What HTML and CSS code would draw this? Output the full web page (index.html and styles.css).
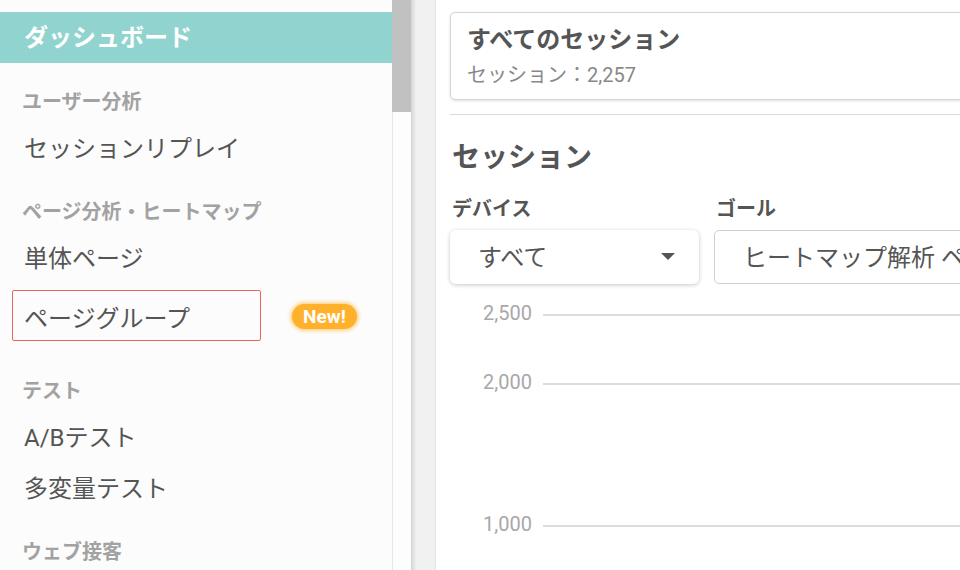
FILE: index.html
```html
<!DOCTYPE html>
<html lang="ja">
<head>
<meta charset="utf-8">
<title>ダッシュボード</title>
<link rel="stylesheet" href="styles.css">
</head>
<body>
<div class="app">
  <aside class="sidebar">
    <div class="nav-top">ダッシュボード</div>
    <section class="nav-section">
      <h3 class="nav-heading">ユーザー分析</h3>
      <a class="nav-item">セッションリプレイ</a>
    </section>
    <section class="nav-section">
      <h3 class="nav-heading">ページ分析・ヒートマップ</h3>
      <a class="nav-item">単体ページ</a>
      <div class="nav-row">
        <a class="nav-item is-selected">ページグループ</a>
        <span class="badge">New!</span>
      </div>
    </section>
    <section class="nav-section">
      <h3 class="nav-heading">テスト</h3>
      <a class="nav-item">A/Bテスト</a>
      <a class="nav-item">多変量テスト</a>
    </section>
    <section class="nav-section">
      <h3 class="nav-heading">ウェブ接客</h3>
    </section>
  </aside>
  <div class="scrollbar"><div class="scrollbar-thumb"></div></div>
  <div class="gutter"></div>
  <main class="main">
    <div class="content">
      <div class="summary-card">
        <div class="summary-title">すべてのセッション</div>
        <div class="summary-sub">セッション：2,257</div>
      </div>
      <hr class="divider">
      <h2 class="section-title">セッション</h2>
      <div class="filters">
        <div class="filter filter-device">
          <div class="filter-label">デバイス</div>
          <div class="select select-raised">
            <span>すべて</span>
            <span class="caret"></span>
          </div>
        </div>
        <div class="filter filter-goal">
          <div class="filter-label">ゴール</div>
          <div class="select select-outline">
            <span>ヒートマップ解析 ページグループ</span>
          </div>
        </div>
      </div>
      <svg class="chart" width="510" height="280" viewBox="0 0 510 280">
        <g class="grid">
          <line x1="93" y1="26" x2="510" y2="26"></line>
          <line x1="93" y1="95" x2="510" y2="95"></line>
          <line x1="93" y1="237" x2="510" y2="237"></line>
        </g>
        <g class="axis">
          <text x="82" y="24">2,500</text>
          <text x="82" y="93">2,000</text>
          <text x="82" y="235">1,000</text>
        </g>
      </svg>
    </div>
  </main>
</div>
</body>
</html>
```
FILE: styles.css
```css
* { box-sizing: border-box; }
html, body {
  margin: 0;
  padding: 0;
  width: 960px;
  height: 570px;
  overflow: hidden;
  background: #fff;
}
body {
  font-family: Roboto, "Noto Sans CJK JP", sans-serif;
  color: #555;
}
.app {
  display: flex;
  height: 570px;
}
.sidebar {
  width: 392px;
  flex: none;
  background: #fcfcfc;
  padding-top: 12px;
}
.nav-top {
  height: 51px;
  line-height: 49px;
  padding-top: 2px;
  background: #91d3cf;
  color: #fff;
  font-size: 24px;
  font-weight: 700;
  padding-left: 24px;
}
.nav-section {
  padding-top: 22px;
}
.nav-heading {
  margin: 0;
  height: 37px;
  line-height: 30px;
  padding-top: 2px;
  padding-left: 22px;
  font-size: 20px;
  font-weight: 700;
  color: #a2a2a2;
}
.nav-item {
  display: block;
  height: 51px;
  line-height: 47px;
  padding-top: 4px;
  padding-left: 24px;
  font-size: 24px;
  color: #555;
  white-space: nowrap;
}
.nav-row {
  display: flex;
  align-items: center;
  margin-top: 7px;
  margin-bottom: 11px;
}
.nav-item.is-selected {
  width: 249px;
  margin-left: 12px;
  padding-left: 11px;
  padding-top: 8px;
  border: 1.5px solid #e8655d;
  border-radius: 2px;
  line-height: 40px;
}
.badge {
  margin-left: 31px;
  margin-top: 2px;
  width: 65px;
  height: 25px;
  line-height: 25px;
  border-radius: 13px;
  background: #ffb12b;
  color: #fff;
  font-size: 19px;
  font-weight: 700;
  text-align: center;
  box-shadow: 0 0 4px 1px rgba(255, 176, 40, 0.75);
}
.scrollbar {
  width: 19px;
  flex: none;
  background: #fdfdfd;
  border-left: 1px solid #e6e6e6;
}
.scrollbar-thumb {
  height: 112px;
  margin-left: -1px;
  background: #c1c1c1;
}
.gutter {
  width: 25px;
  flex: none;
  background: #f1f1f1;
  border-right: 1px solid #e4e4e4;
  box-shadow: inset 5px 0 4px -3px rgba(0, 0, 0, 0.14);
}
.main {
  flex: 1;
  overflow: hidden;
  padding: 12px 0 0 14px;
  background: #fff;
}
.content {
  width: 640px;
}
.summary-card {
  height: 88px;
  border: 1px solid #d4d4d4;
  border-radius: 5px;
  box-shadow: 0 1px 3px rgba(0, 0, 0, 0.12);
  padding: 12px 16px 0;
}
.summary-title {
  font-size: 24px;
  font-weight: 700;
  line-height: 30px;
  color: #555;
}
.summary-sub {
  margin-top: 7px;
  font-size: 20px;
  line-height: 26px;
  color: #888;
}
.divider {
  margin: 14px 0 0;
  border: 0;
  border-top: 1.5px solid #dadada;
}
.section-title {
  margin: 23px 0 0 2px;
  font-size: 28px;
  font-weight: 700;
  line-height: 40px;
  color: #555;
}
.filters {
  display: flex;
  gap: 15px;
  margin-top: 17px;
}
.filter-label {
  font-size: 20px;
  font-weight: 700;
  line-height: 28px;
  padding-left: 2px;
  color: #555;
}
.select {
  margin-top: 7px;
  height: 54px;
  padding-bottom: 3px;
  display: flex;
  align-items: center;
  font-size: 24px;
  color: #555;
  white-space: nowrap;
  overflow: hidden;
}
.select-raised {
  width: 249px;
  padding-left: 28px;
  padding-right: 24px;
  justify-content: space-between;
  border-radius: 6px;
  background: #fff;
  box-shadow: 0 1px 4px rgba(0, 0, 0, 0.22);
}
.caret {
  width: 0;
  height: 0;
  margin-top: 2px;
  border-left: 7px solid transparent;
  border-right: 7px solid transparent;
  border-top: 7px solid #555;
}
.select-outline {
  width: 330px;
  padding-left: 28px;
  border: 1px solid #cfcfcf;
  border-radius: 5px;
}
.chart {
  display: block;
  margin-top: 5px;
}
.grid line {
  stroke: #dcdcdc;
  stroke-width: 2;
}
.axis text {
  font-family: Roboto, sans-serif;
  font-size: 20px;
  fill: #a8a8a8;
  text-anchor: end;
  dominant-baseline: central;
}
```
